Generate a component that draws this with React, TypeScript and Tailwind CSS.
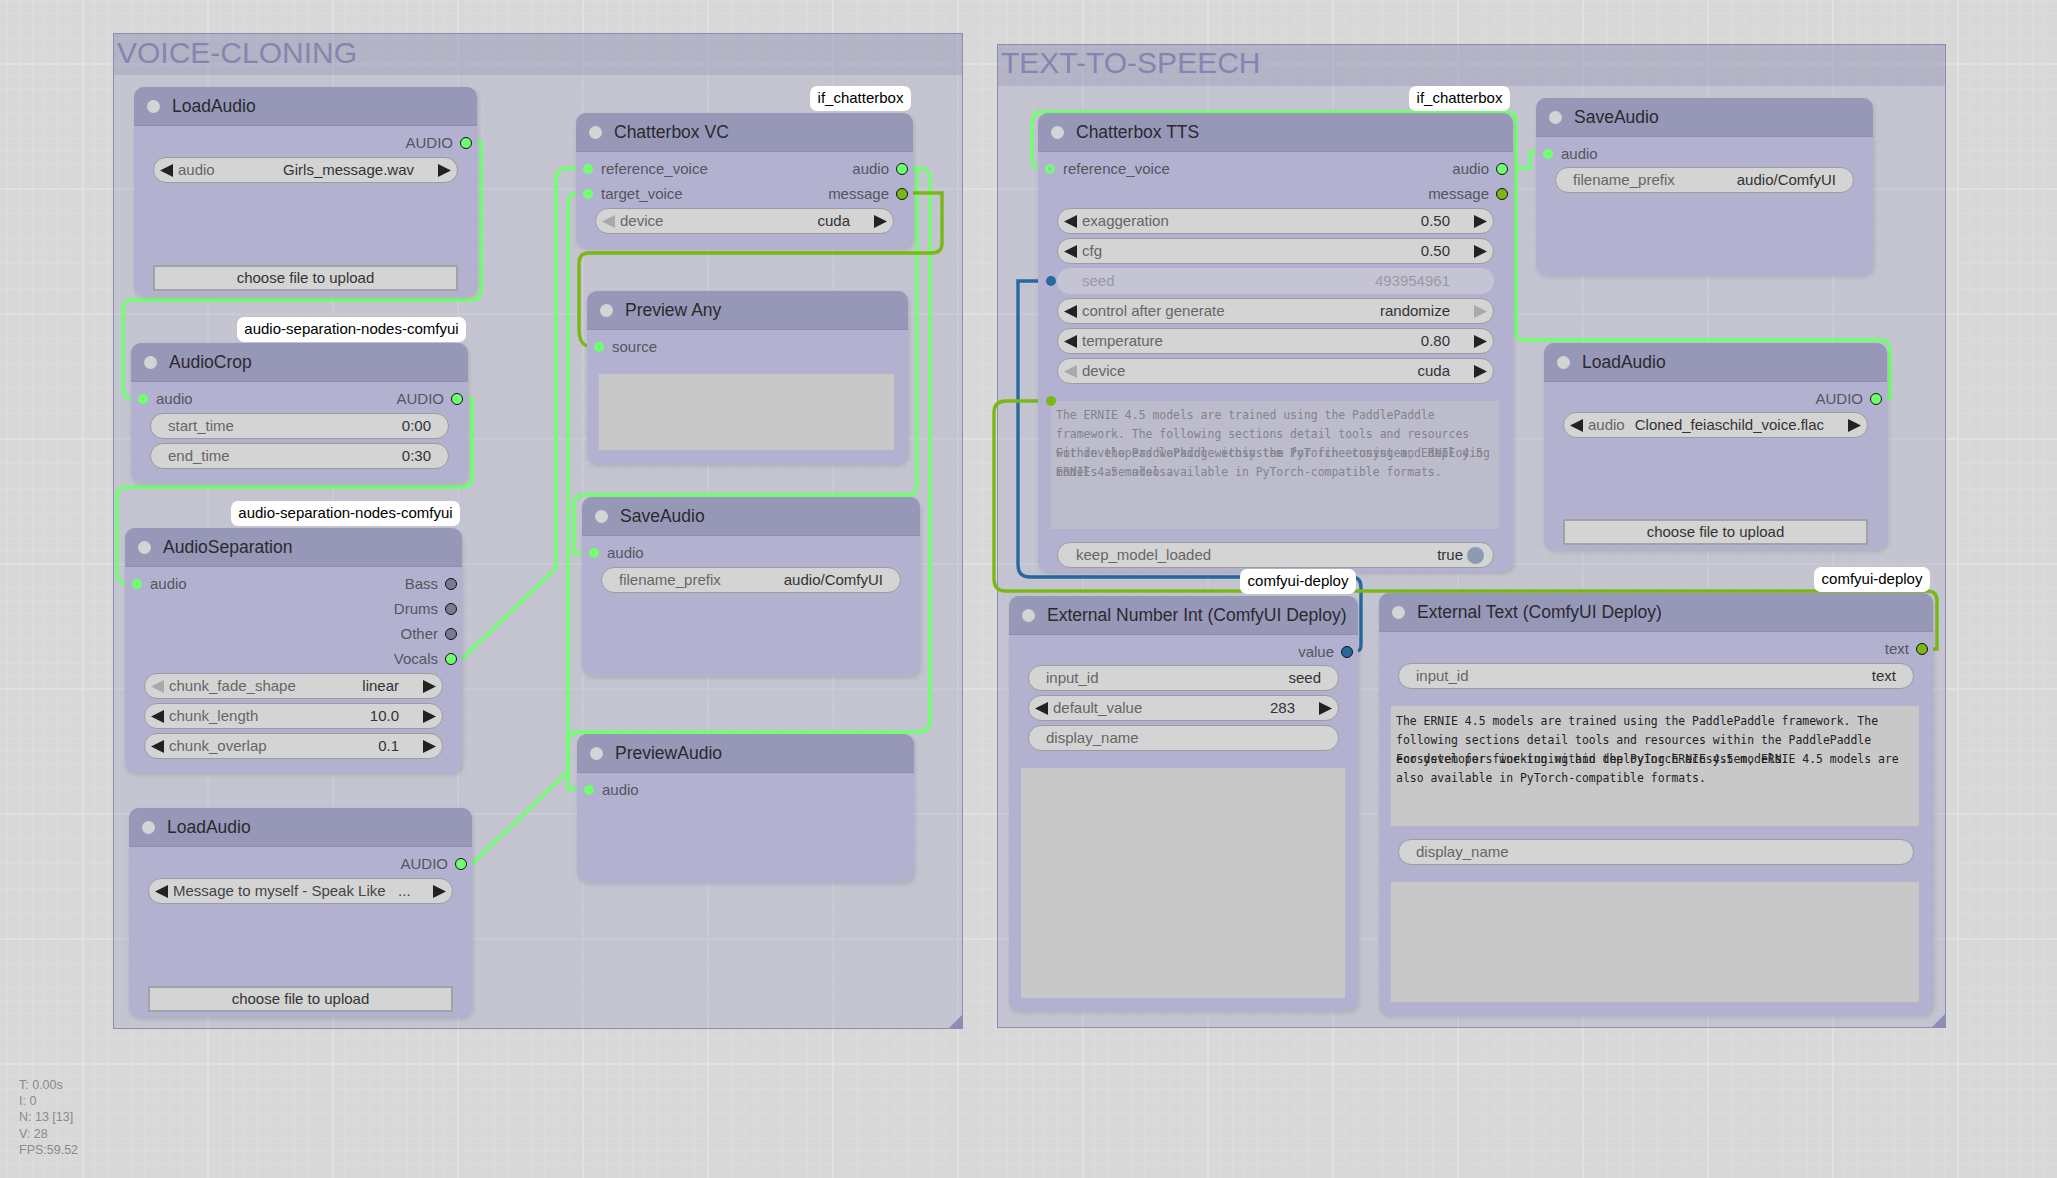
import type { ReactNode } from 'react';
import clsx from 'clsx';

const GREEN = '#70ff70';
const LIME = '#7ab816';
const BLUE = '#2668a0';

function Arrow({ dir, off }: { dir: 'left' | 'right'; off?: boolean }) {
  return (
    <svg width="13" height="13" viewBox="0 0 13 13" className="shrink-0">
      <polygon points={dir === 'left' ? '0,6.5 13,0 13,13' : '13,6.5 0,0 0,13'} fill={off ? '#a9a9a9' : '#222222'} />
    </svg>
  );
}

function Widget({ label, value, left, right, offLeft, offRight }: {
  label: string; value?: string; left?: boolean; right?: boolean; offLeft?: boolean; offRight?: boolean;
}) {
  const arrows = left || right;
  return (
    <div className={clsx('mx-[19px] mb-[4px] flex h-[26px] items-center rounded-full border-[1.5px] border-[#9c9c9c] bg-[#d4d4d4] text-[15px]', arrows ? 'px-[6px]' : 'px-[17px]')}>
      {arrows && <Arrow dir="left" off={offLeft} />}
      <span className={clsx('truncate text-[#666666]', arrows && 'ml-[5px]')}>{label}</span>
      <span className={clsx('ml-auto whitespace-nowrap text-[#333333]', arrows && 'mr-[24px]')}>{value}</span>
      {arrows && <Arrow dir="right" off={offRight} />}
    </div>
  );
}

function UploadButton() {
  return (
    <div className="mx-[19px] mb-[5px] mt-auto flex h-[26px] items-center justify-center border-2 border-[#a3a3a3] bg-[#d4d4d4] text-[15px] text-[#333333]">
      choose file to upload
    </div>
  );
}

function InputDot({ color = GREEN }: { color?: string }) {
  return <span className="size-[10px] shrink-0 -translate-y-[1px] rounded-full" style={{ backgroundColor: color }} />;
}

function OutputDot({ color = GREEN }: { color?: string }) {
  return <span className="size-[12px] shrink-0 -translate-y-[1px] rounded-full border-[1.5px] border-[#111111]" style={{ backgroundColor: color }} />;
}

// one slot row: input on the left, output on the right
function Row({ input, output, color, inColor, ring }: { input?: string; output?: string; color?: string; inColor?: string; ring?: boolean }) {
  return (
    <div className="flex h-[25px] items-center pl-[7px] pr-[5px] text-[15px] text-[#555560]">
      {input && (ring
        ? <span className="size-[10px] shrink-0 -translate-y-[1px] rounded-full border-[3px] border-[#70ff70] bg-[#b2b2d0]" />
        : <InputDot color={inColor} />)}
      {input && <span className="ml-[8px]">{input}</span>}
      {output && <span className="ml-auto mr-[7px]">{output}</span>}
      {output && <OutputDot color={color} />}
    </div>
  );
}

function GraphNode({ title, className, children }: { title: string; className: string; children: ReactNode }) {
  return (
    <div className={clsx('absolute flex flex-col rounded-[10px] bg-[#b2b2d0] shadow-[1px_2px_4px_rgba(0,0,0,0.12)]', className)}>
      <div className="flex h-[39px] shrink-0 items-center rounded-t-[10px] border-b border-[#8e8eae] bg-[#9797b8] pl-[13px]">
        <span className="size-[13px] shrink-0 rounded-full bg-[#d4d4d4]" />
        <span className="ml-[12px] mt-[1px] whitespace-nowrap text-[17.5px] text-[#2a2a2e]">{title}</span>
      </div>
      <div className="flex flex-1 flex-col pt-[5px]">{children}</div>
    </div>
  );
}

function Group({ title, className, titleClass }: { title: string; className: string; titleClass?: string }) {
  return (
    <div className={clsx('absolute border-[1.5px] border-[#8d8db6] bg-[rgba(150,150,190,0.3)]', className)}>
      <div className="flex h-[41px] items-center bg-[rgba(115,115,155,0.2)] pl-[3px] text-[30px] text-[#8486b0]">
        <span className={titleClass}>{title}</span>
      </div>
      <svg width="13" height="13" viewBox="0 0 13 13" className="absolute bottom-0 right-0">
        <polygon points="13,0 13,13 0,13" fill="#8d8db6" />
      </svg>
    </div>
  );
}

function Badge({ text, className }: { text: string; className: string }) {
  return (
    <div className={clsx('absolute flex h-[25px] items-center justify-center rounded-[7px] bg-white text-[15px] text-black', className)}>
      {text}
    </div>
  );
}

// stacked lines of a multiline box; the second block is drawn over the first
function Lines({ lines, over, top }: { lines: string; over: string; top: string }) {
  const cls = clsx("absolute left-[5px] font-['DejaVu_Sans_Mono',monospace] text-[11.44px] leading-[19px]", top);
  return (
    <>
      <pre className={cls}>{lines}</pre>
      <pre className={cls}>{over}</pre>
    </>
  );
}

const WIRES = [
  { color: GREEN, d: 'M477 142 L481 142 L481 290 Q481 300 471 300 L133 300 Q123 300 123 310 L123 388 Q123 397 131 399' },
  { color: GREEN, d: 'M468 399 L472 399 L472 477 Q472 487 462 487 L127 487 Q117 487 117 497 L117 572 Q117 582 125 584' },
  { color: GREEN, d: 'M462 659 L556 568 L556 180 Q556 168 568 168 L576 168' },
  { color: GREEN, d: 'M472 864 L568 771 L568 205 Q568 193 576 193' },
  { color: GREEN, d: 'M913 168 Q917 168 917 176 L917 485 Q917 495 907 495 L584 495 Q574 495 574 505 L574 553 L582 553' },
  { color: GREEN, d: 'M913 168 L918 168 Q930 168 930 180 L930 720 Q930 732 918 732 L580 732 Q568 732 568 744 L568 789 L577 789' },
  { color: LIME, d: 'M913 193 L942 193 L942 243 Q942 253 932 253 L589 253 Q579 253 579 263 L579 330 Q579 343 587 346' },
  { color: GREEN, d: 'M1887 398 L1890 398 L1890 350 Q1890 340 1880 340 L1526 340 Q1516 340 1516 330 L1516 122 Q1516 112 1506 112 L1042 112 Q1032 112 1032 122 L1032 160 Q1032 166 1038 168' },
  { color: GREEN, d: 'M1514 168 L1530 168 L1530 152 L1536 152' },
  { color: BLUE, d: 'M1358 651 Q1361 650 1361 645 L1361 587 Q1361 577 1351 577 L1030 577 Q1018 577 1018 565 L1018 281 L1038 281' },
  { color: LIME, d: 'M1933 649 L1937 649 L1937 601 Q1937 591 1927 591 L1006 591 Q994 591 994 579 L994 413 Q994 401 1006 401 L1038 401' },
];

export default function App() {
  return (
    <div className="relative h-[1178px] w-[2057px] overflow-hidden bg-[#d8d8d8] bg-[linear-gradient(#e1e1e1_2px,transparent_2px),linear-gradient(90deg,#e1e1e1_2px,transparent_2px),linear-gradient(#dddddd_1px,transparent_1px),linear-gradient(90deg,#dddddd_1px,transparent_1px)] bg-[size:125px_125px,125px_125px,12.5px_12.5px,12.5px_12.5px] bg-[position:82px_63px,82px_63px,7px_0.5px,7px_0.5px] font-['Liberation_Sans',Arial,sans-serif]">
      <Group title="VOICE-CLONING" titleClass="-mt-[4px]" className="left-[113px] top-[33px] h-[996px] w-[850px]" />
      <Group title="TEXT-TO-SPEECH" titleClass="-mt-[6px]" className="left-[997px] top-[44px] h-[984px] w-[949px]" />

      <svg width="2057" height="1178" className="absolute left-0 top-0">
        {WIRES.map((w) => (
          <path key={w.d} d={w.d} fill="none" stroke={w.color} strokeWidth="3.4" />
        ))}
      </svg>

      {/* Voice cloning */}
      <GraphNode title="LoadAudio" className="left-[134px] top-[87px] h-[209px] w-[343px]">
        <Row output="AUDIO" />
        <div className="mt-[1px]"><Widget label="audio" value="Girls_message.wav" left right /></div>
        <UploadButton />
      </GraphNode>

      <GraphNode title="AudioCrop" className="left-[131px] top-[343px] h-[140px] w-[337px]">
        <Row input="audio" output="AUDIO" />
        <div className="mt-[1px]">
          <Widget label="start_time" value="0:00" />
          <Widget label="end_time" value="0:30" />
        </div>
      </GraphNode>

      <GraphNode title="AudioSeparation" className="left-[125px] top-[528px] h-[245px] w-[337px]">
        <Row input="audio" output="Bass" color="#7a7a90" />
        <Row output="Drums" color="#7a7a90" />
        <Row output="Other" color="#7a7a90" />
        <Row output="Vocals" />
        <div className="mt-[1px]">
          <Widget label="chunk_fade_shape" value="linear" left right offLeft />
          <Widget label="chunk_length" value="10.0" left right />
          <Widget label="chunk_overlap" value="0.1" left right />
        </div>
      </GraphNode>

      <GraphNode title="LoadAudio" className="left-[129px] top-[808px] h-[209px] w-[343px]">
        <Row output="AUDIO" />
        <div className="mt-[1px]">
          <div className="mx-[19px] mb-[4px] flex h-[26px] items-center rounded-full border-[1.5px] border-[#9c9c9c] bg-[#d4d4d4] px-[6px] text-[15px] text-[#444444]">
            <Arrow dir="left" />
            <span className="ml-[5px] mr-auto whitespace-pre">Message to myself - Speak Like   ...</span>
            <Arrow dir="right" />
          </div>
        </div>
        <UploadButton />
      </GraphNode>

      <GraphNode title="Chatterbox VC" className="left-[576px] top-[113px] h-[135px] w-[337px]">
        <Row input="reference_voice" output="audio" />
        <Row input="target_voice" output="message" color={LIME} />
        <div className="mt-[1px]"><Widget label="device" value="cuda" left right offLeft /></div>
      </GraphNode>

      <GraphNode title="Preview Any" className="left-[587px] top-[291px] h-[173px] w-[321px]">
        <Row input="source" />
        <div className="ml-[12px] mr-[14px] mt-[14px] h-[76px] bg-[#c8c8c8]" />
      </GraphNode>

      <GraphNode title="SaveAudio" className="left-[582px] top-[497px] h-[179px] w-[338px]">
        <Row input="audio" />
        <div className="mt-[1px]"><Widget label="filename_prefix" value="audio/ComfyUI" /></div>
      </GraphNode>

      <GraphNode title="PreviewAudio" className="left-[577px] top-[734px] h-[148px] w-[337px]">
        <Row input="audio" />
      </GraphNode>

      {/* Text to speech */}
      <GraphNode title="Chatterbox TTS" className="left-[1038px] top-[113px] h-[459px] w-[475px]">
        <Row input="reference_voice" output="audio" ring />
        <Row output="message" color={LIME} />
        <div className="mt-[1px]">
          <Widget label="exaggeration" value="0.50" left right />
          <Widget label="cfg" value="0.50" left right />
          <div className="mx-[19px] mb-[4px] flex h-[26px] items-center rounded-full bg-[#c4c4d4] pl-[25px] pr-[44px] text-[15px] text-[#9a9aa2]">
            <span>seed</span>
            <span className="ml-auto">493954961</span>
          </div>
          <Widget label="control after generate" value="randomize" left right offRight />
          <Widget label="temperature" value="0.80" left right />
          <Widget label="device" value="cuda" left right offLeft />
        </div>
        <div className="relative ml-[13px] mr-[14px] mt-[13px] h-[128px] shrink-0 bg-[#bcbccc] text-[#83838d]">
          <Lines
            top="top-[5px]"
            lines={'The ERNIE 4.5 models are trained using the PaddlePaddle\nframework. The following sections detail tools and resources\nwithin the PaddlePaddle ecosystem for fine-tuning and deploying\nERNIE 4.5 models.'}
            over={'\n\nFor developers working within the PyTorch ecosystem, ERNIE 4.5\nmodels are also available in PyTorch-compatible formats.'}
          />
        </div>
        <div className="mx-[19px] mt-[13px] flex h-[26px] items-center rounded-full border-[1.5px] border-[#9c9c9c] bg-[#d4d4d4] pl-[18px] pr-[9px] text-[15px]">
          <span className="text-[#666666]">keep_model_loaded</span>
          <span className="ml-auto text-[#333333]">true</span>
          <span className="ml-[4px] size-[17px] rounded-full bg-[#8a9bb2]" />
        </div>
        <span className="absolute left-[8px] top-[163px] size-[10px] rounded-full bg-[#2668a0]" />
        <span className="absolute left-[8px] top-[283px] size-[10px] rounded-full bg-[#7ab816]" />
      </GraphNode>

      <GraphNode title="SaveAudio" className="left-[1536px] top-[98px] h-[177px] w-[337px]">
        <Row input="audio" />
        <div><Widget label="filename_prefix" value="audio/ComfyUI" /></div>
      </GraphNode>

      <GraphNode title="LoadAudio" className="left-[1544px] top-[343px] h-[207px] w-[343px]">
        <Row output="AUDIO" />
        <div><Widget label="audio" value="Cloned_feiaschild_voice.flac" left right /></div>
        <UploadButton />
      </GraphNode>

      <GraphNode title="External Number Int (ComfyUI Deploy)" className="left-[1009px] top-[596px] h-[415px] w-[349px]">
        <Row output="value" color={BLUE} />
        <div>
          <Widget label="input_id" value="seed" />
          <Widget label="default_value" value="283" left right />
          <Widget label="display_name" />
        </div>
        <div className="ml-[12px] mr-[13px] mt-[13px] h-[230px] bg-[#c8c8c8]" />
      </GraphNode>

      <GraphNode title="External Text (ComfyUI Deploy)" className="left-[1379px] top-[593px] h-[422px] w-[554px]">
        <Row output="text" color={LIME} />
        <div className="mt-[1px]"><Widget label="input_id" value="text" /></div>
        <div className="relative ml-[12px] mr-[14px] mt-[13px] h-[120px] shrink-0 bg-[#c8c8c8] text-[#222222]">
          <Lines
            top="top-[6px]"
            lines={'The ERNIE 4.5 models are trained using the PaddlePaddle framework. The\nfollowing sections detail tools and resources within the PaddlePaddle\necosystem for fine-tuning and deploying ERNIE 4.5 models.'}
            over={'\n\nFor developers working within the PyTorch ecosystem, ERNIE 4.5 models are\nalso available in PyTorch-compatible formats.'}
          />
        </div>
        <div className="mt-[13px]"><Widget label="display_name" /></div>
        <div className="ml-[12px] mr-[14px] mt-[13px] h-[120px] bg-[#c8c8c8]" />
      </GraphNode>

      <Badge text="audio-separation-nodes-comfyui" className="left-[237px] top-[317px] w-[229px]" />
      <Badge text="audio-separation-nodes-comfyui" className="left-[231px] top-[501px] w-[229px]" />
      <Badge text="if_chatterbox" className="left-[810px] top-[86px] w-[101px]" />
      <Badge text="if_chatterbox" className="left-[1409px] top-[86px] w-[101px]" />
      <Badge text="comfyui-deploy" className="left-[1240px] top-[569px] w-[116px]" />
      <Badge text="comfyui-deploy" className="left-[1814px] top-[567px] w-[116px]" />

      <div className="absolute left-[19px] top-[1077px] text-[12.5px] leading-[16.2px] text-[#8a8a8a]">
        <div>T: 0.00s</div>
        <div>I: 0</div>
        <div>N: 13 [13]</div>
        <div>V: 28</div>
        <div>FPS:59.52</div>
      </div>
    </div>
  );
}
